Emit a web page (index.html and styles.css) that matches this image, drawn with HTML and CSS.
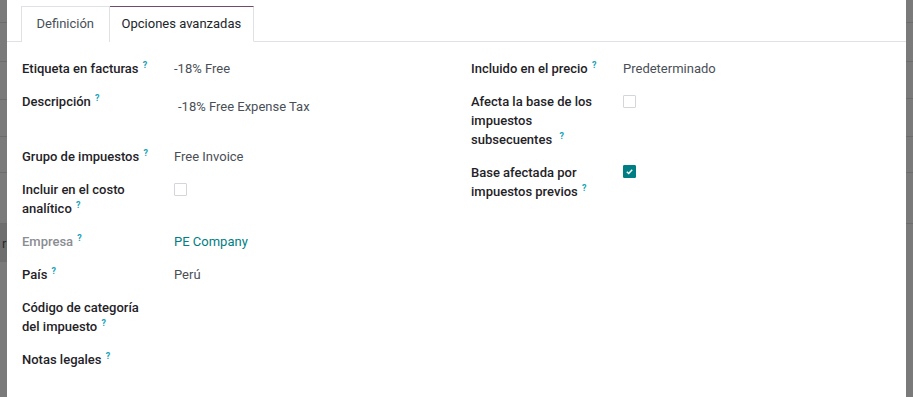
FILE: index.html
```html
<!doctype html>
<html lang="es">
	<head>
		<meta charset="UTF-8" />
		<meta name="viewport" content="width=device-width, initial-scale=1.0" />
		<title>Impuesto - Opciones avanzadas</title>
		<link rel="stylesheet" href="styles.css">
	</head>
	<body>
		<div class="backdrop left">
			<div class="bg-row" style="height: 23px"></div>
			<div class="bg-row" style="height: 39px"></div>
			<div class="bg-row" style="height: 38px"></div>
			<div class="bg-row" style="height: 37px"></div>
			<div class="bg-row" style="height: 36px"></div>
			<div class="bg-row" style="height: 51px"></div>
			<div class="bg-row dark" style="height: 38px"><span>r</span></div>
		</div>

		<div class="modal">
			<ul class="tabs">
				<li class="tab">Definición</li>
				<li class="tab active">Opciones avanzadas</li>
			</ul>

			<div class="sheet">
				<div class="group">
					<div class="label">Etiqueta en facturas <sup>?</sup></div>
					<div class="value">-18% Free</div>

					<div class="label">Descripción <sup>?</sup></div>
					<div class="value textarea">-18% Free Expense Tax</div>

					<div class="label">Grupo de impuestos <sup>?</sup></div>
					<div class="value">Free Invoice</div>

					<div class="label">Incluir en el costo<br>analítico <sup>?</sup></div>
					<div class="value"><span class="check"></span></div>

					<div class="label muted">Empresa <sup>?</sup></div>
					<div class="value link">PE Company</div>

					<div class="label">País <sup>?</sup></div>
					<div class="value">Perú</div>

					<div class="label">Código de categoría<br>del impuesto <sup>?</sup></div>
					<div class="value"></div>

					<div class="label">Notas legales <sup>?</sup></div>
					<div class="value"></div>
				</div>

				<div class="group">
					<div class="label">Incluido en el precio <sup>?</sup></div>
					<div class="value">Predeterminado</div>

					<div class="label">Afecta la base de los<br>impuestos<br>subsecuentes &nbsp;<sup>?</sup></div>
					<div class="value"><span class="check"></span></div>

					<div class="label">Base afectada por<br>impuestos previos <sup>?</sup></div>
					<div class="value">
						<span class="check checked">
							<svg viewBox="0 0 10 10" width="9" height="9"><path d="M2 5.2 L4.1 7.2 L8 3" fill="none" stroke="#fff" stroke-width="1.6" /></svg>
						</span>
					</div>
				</div>
			</div>
		</div>

		<div class="backdrop right">
			<div class="bg-row" style="height: 23px"></div>
			<div class="bg-row" style="height: 39px"></div>
			<div class="bg-row" style="height: 37px"></div>
			<div class="bg-row" style="height: 38px"></div>
			<div class="bg-row" style="height: 36px"></div>
			<div class="bg-row" style="height: 51px"></div>
		</div>
	</body>
</html>
```

FILE: styles.css
```css
* {
	margin: 0;
	padding: 0;
	box-sizing: border-box;
}

body {
	font-family: Roboto, "Noto Sans", sans-serif;
	font-size: 13px;
	line-height: 19px;
	color: #1f2328;
	background: #777;
	display: flex;
	height: 100vh;
	overflow: hidden;
}

/* dimmed list behind the dialog */
.backdrop {
	width: 7px;
	flex: none;
	background: #7a7a7a;
}

.bg-row {
	border-bottom: 1px solid #6c6c6c;
	position: relative;
	overflow: hidden;
}

.bg-row.dark {
	background: #6e6e6e;
	border-bottom: none;
}

.bg-row span {
	position: absolute;
	left: 2px;
	top: 10px;
	color: #2a2a2a;
	font-size: 13px;
}

.modal {
	flex: 1;
	background: #fff;
}

.tabs {
	list-style: none;
	display: flex;
	padding: 6px 0 0 14px;
	border-bottom: 1px solid #dee2e6;
}

.tab {
	height: 36px;
	margin-bottom: -1px;
	padding: 0 14.5px;
	line-height: 34px;
	font-size: 13px;
	color: #495057;
	border: 1px solid #dee2e6;
	border-bottom: none;
	background: #fff;
}

.tab.active {
	padding: 0 12px;
	color: #212529;
	border-top-color: #714b67;
	border-bottom: 1px solid #fff;
	border-left: none;
}

.sheet {
	display: grid;
	grid-template-columns: 434px 1fr;
	column-gap: 15px;
	padding: 17px 15px 0;
}

.group {
	display: grid;
	grid-template-columns: 152px 1fr;
	row-gap: 14px;
	align-content: start;
}

.label {
	font-weight: 500;
	color: #1f2328;
}

.label.muted {
	color: #8a8d92;
}

sup {
	font-size: 9px;
	font-weight: 700;
	color: #17a2b8;
	vertical-align: top;
	position: relative;
	top: -3px;
	margin-left: 1px;
}

.value {
	color: #4a4f57;
	min-height: 19px;
}

.value.textarea {
	height: 41px;
	padding: 5px 0 0 4px;
}

.value.link {
	color: #017e84;
}

.check {
	display: inline-flex;
	align-items: center;
	justify-content: center;
	width: 13px;
	height: 13px;
	margin-top: 3px;
	border: 1px solid #d3d6da;
	border-radius: 1px;
	vertical-align: top;
}

.check.checked {
	margin-top: 2px;
	background: #017e84;
	border-color: #017e84;
}
```
